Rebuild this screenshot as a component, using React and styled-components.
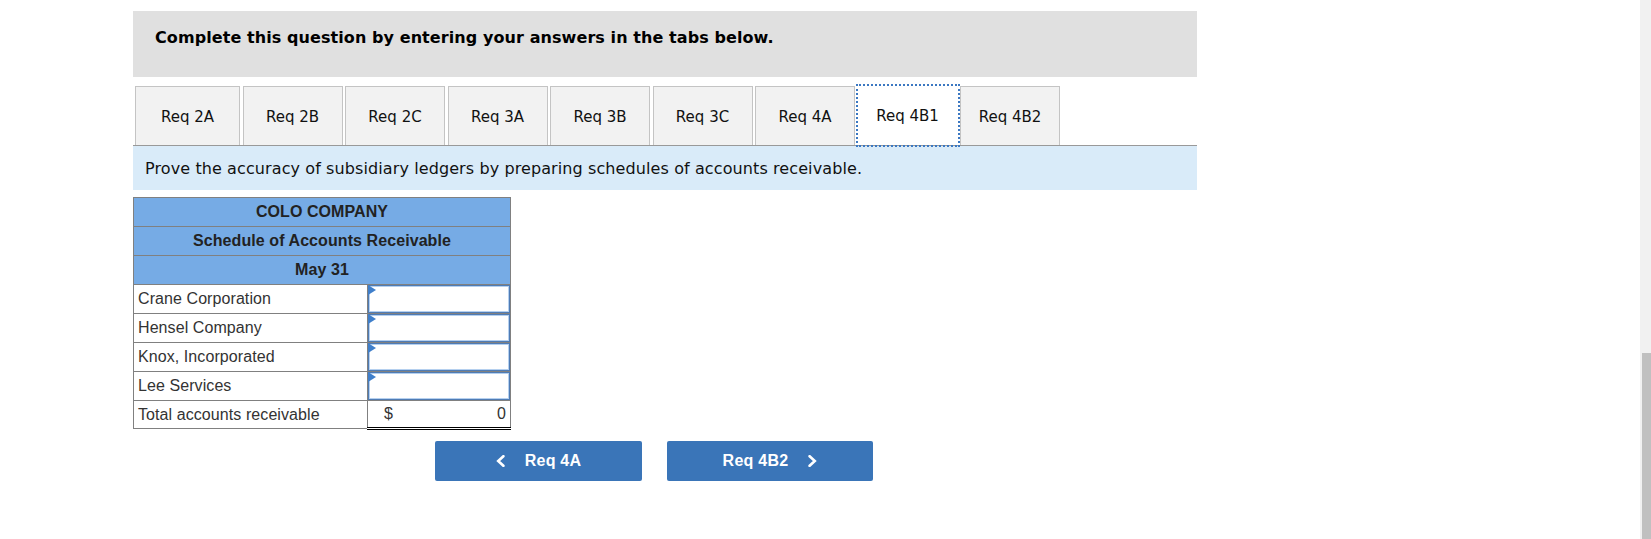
import React from "react";
import styled, { createGlobalStyle } from "styled-components";

const Global = createGlobalStyle`
  html, body { margin: 0; padding: 0; background: #fff; overflow: hidden; }
`;
const Page = styled.div`
  display: flex;
  width: 1651px;
  height: 539px;
  overflow: hidden;
`;
const Main = styled.main`
  flex: 1;
  padding: 11px 0 0 133px;
`;
const Content = styled.div`
  width: 1064px;
`;
const Banner = styled.div`
  height: 66px;
  box-sizing: border-box;
  padding: 17px 22px;
  background: #e0e0e0;
  color: #000;
  font: bold 16px/20px "DejaVu Sans", Verdana, sans-serif;
  letter-spacing: 0.08px;
`;
const Tabs = styled.div`
  display: flex;
  gap: 2.5px;
  height: 60px;
  box-sizing: border-box;
  margin-top: 9px;
  padding-left: 2px;
  border-bottom: 1px solid #999;
`;
const Tab = styled.button`
  width: ${p => (p.$wide ? "105px" : "100px")};
  height: 59px;
  box-sizing: border-box;
  padding: 1px 0 0;
  border: ${p => (p.$active ? "0" : "1px solid #c4c4c4")};
  border-bottom: 0;
  outline: ${p => (p.$active ? "2px dotted #3b78c2" : "none")};
  background: ${p => (p.$active ? "#fff" : "#f2f2f2")};
  color: #111;
  font: 15px/20px "DejaVu Sans", Verdana, sans-serif;
`;
const Hint = styled.div`
  height: 44px;
  box-sizing: border-box;
  padding: 13px 12px;
  background: #d9ebf9;
  color: #111;
  font: 16px/20px "DejaVu Sans", Verdana, sans-serif;
  letter-spacing: 0.1px;
`;
const Schedule = styled.table`
  width: 377px;
  height: 231px;
  margin-top: 7px;
  border-collapse: collapse;
  table-layout: fixed;
  font: 16px/20px "Liberation Sans", Arial, sans-serif;
  letter-spacing: 0.08px;
  color: #222;
`;
const LabelColumn = styled.col`
  width: 234px;
`;
const ValueColumn = styled.col`
  width: 143px;
`;
const HeadCell = styled.th`
  height: 28px;
  padding: 0;
  background: #76abe5;
  border: 1px solid #808080;
  color: #222;
  font-weight: bold;
  text-align: center;
`;
const LabelCell = styled.td`
  height: 28px;
  box-sizing: border-box;
  padding: 0 4px;
  border: 1px solid #808080;
  color: #333;
`;
const InputCell = styled.td`
  position: relative;
  padding: 0;
  border: 1px solid #808080;
`;
const Marker = styled.span`
  position: absolute;
  top: 0;
  left: 0;
  width: 0;
  height: 0;
  border-style: solid;
  border-width: 5px 0 5px 8px;
  border-color: transparent transparent transparent #3f7fcb;
`;
const Answer = styled.input`
  display: block;
  width: 100%;
  height: 28px;
  box-sizing: border-box;
  border: 1px solid #4f7cb5;
  box-shadow: inset 0 0 0 1px #b5d0ef;
  outline: none;
  background: #fff;
`;
const TotalCell = styled.td`
  padding: 0 4px 0 0;
  border: 1px solid #808080;
  border-top: 1px solid #000;
  border-bottom: 3px double #000;
  color: #333;
`;
const TotalInner = styled.div`
  display: flex;
  justify-content: space-between;
  padding-left: 16px;
`;
const Nav = styled.div`
  display: flex;
  gap: 25px;
  margin-top: 11px;
  padding-left: 302px;
`;
const NavButton = styled.button`
  display: flex;
  align-items: center;
  justify-content: center;
  gap: 20px;
  width: ${p => p.$w}px;
  height: 40px;
  padding: 0;
  border: 0;
  border-radius: 2px;
  background: #3a75b8;
  color: #fff;
  font: bold 16px/20px "Liberation Sans", Arial, sans-serif;
  letter-spacing: 0.25px;
`;
const Scrollbar = styled.aside`
  width: 11px;
  box-sizing: border-box;
  padding: 353px 0 0 2px;
  background: #f1f1f1;
`;
const Thumb = styled.div`
  height: 186px;
  background: #c0c0c0;
`;

const Chevron = ({ left }) => (
  <svg width="9" height="12" viewBox="0 0 9 12" fill="none" stroke="#fff" strokeWidth="2.6" strokeLinecap="round" strokeLinejoin="miter">
    <path d={left ? "M7.4 1.2 2.2 6l5.2 4.8" : "M1.6 1.2 6.8 6l-5.2 4.8"} />
  </svg>
);

const tabs = ["2A", "2B", "2C", "3A", "3B", "3C", "4A", "4B1", "4B2"];
const rows = ["Crane Corporation", "Hensel Company", "Knox, Incorporated", "Lee Services"];

export default function App() {
  return (
    <Page>
      <Global />
      <Main>
        <Content>
          <Banner>Complete this question by entering your answers in the tabs below.</Banner>
          <Tabs>
            {tabs.map((t, i) => (
              <Tab key={t} $wide={i === 0} $active={t === "4B1"}>Req {t}</Tab>
            ))}
          </Tabs>
          <Hint>Prove the accuracy of subsidiary ledgers by preparing schedules of accounts receivable.</Hint>
          <Schedule>
            <colgroup>
              <LabelColumn />
              <ValueColumn />
            </colgroup>
            <thead>
              <tr><HeadCell colSpan={2}>COLO COMPANY</HeadCell></tr>
              <tr><HeadCell colSpan={2}>Schedule of Accounts Receivable</HeadCell></tr>
              <tr><HeadCell colSpan={2}>May 31</HeadCell></tr>
            </thead>
            <tbody>
              {rows.map(r => (
                <tr key={r}>
                  <LabelCell>{r}</LabelCell>
                  <InputCell><Marker /><Answer aria-label={r} /></InputCell>
                </tr>
              ))}
              <tr>
                <LabelCell>Total accounts receivable</LabelCell>
                <TotalCell><TotalInner><span>$</span><span>0</span></TotalInner></TotalCell>
              </tr>
            </tbody>
          </Schedule>
          <Nav>
            <NavButton $w={207}><Chevron left />Req 4A</NavButton>
            <NavButton $w={206}>Req 4B2<Chevron /></NavButton>
          </Nav>
        </Content>
      </Main>
      <Scrollbar><Thumb /></Scrollbar>
    </Page>
  );
}
